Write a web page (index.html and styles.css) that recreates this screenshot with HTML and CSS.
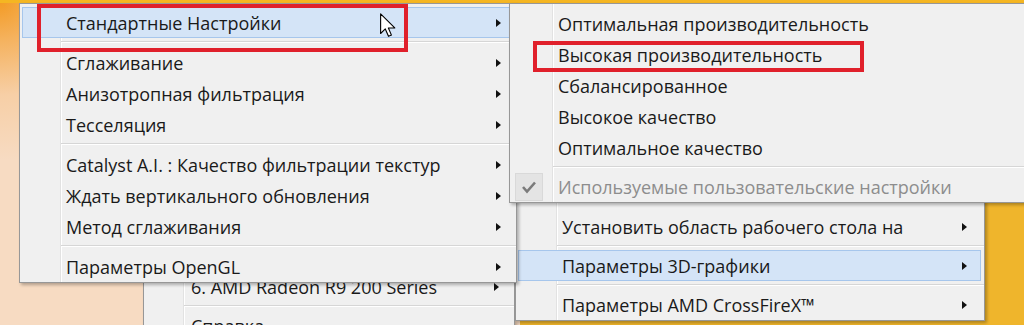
FILE: index.html
```html
<!DOCTYPE html>
<html lang="ru">

<head>
    <meta charset="UTF-8">
    <meta name="viewport" content="width=device-width, initial-scale=1.0">
    <title>Параметры 3D-графики</title>
    <link rel="stylesheet" href="styles.css">
</head>

<body>
    <div class="desktop">
        <div class="menu tray-menu">
            <div class="item"><span class="label">6. AMD Radeon R9 200 Series</span><span class="arrow"></span></div>
            <div class="sep"></div>
            <div class="item"><span class="label">Справка</span></div>
        </div>

        <div class="menu graphics-menu">
            <div class="item"><span class="label">Установить область рабочего стола на</span><span class="arrow"></span></div>
            <div class="sep"></div>
            <div class="item active"><span class="label">Параметры 3D-графики</span><span class="arrow"></span></div>
            <div class="sep"></div>
            <div class="item"><span class="label">Параметры AMD CrossFireX™</span><span class="arrow"></span></div>
        </div>

        <div class="menu presets-menu">
            <div class="item active"><span class="label">Стандартные Настройки</span><span class="arrow"></span></div>
            <div class="sep"></div>
            <div class="item"><span class="label">Сглаживание</span><span class="arrow"></span></div>
            <div class="item"><span class="label">Анизотропная фильтрация</span><span class="arrow"></span></div>
            <div class="item"><span class="label">Тесселяция</span><span class="arrow"></span></div>
            <div class="sep"></div>
            <div class="item"><span class="label">Catalyst A.I. : Качество фильтрации текстур</span><span class="arrow"></span></div>
            <div class="item"><span class="label">Ждать вертикального обновления</span><span class="arrow"></span></div>
            <div class="item"><span class="label">Метод сглаживания</span><span class="arrow"></span></div>
            <div class="sep"></div>
            <div class="item"><span class="label">Параметры OpenGL</span><span class="arrow"></span></div>
        </div>

        <div class="menu quality-menu">
            <div class="item"><span class="label">Оптимальная производительность</span></div>
            <div class="item"><span class="label">Высокая производительность</span></div>
            <div class="item"><span class="label">Сбалансированное</span></div>
            <div class="item"><span class="label">Высокое качество</span></div>
            <div class="item"><span class="label">Оптимальное качество</span></div>
            <div class="sep"></div>
            <div class="item checked disabled">
                <span class="check-box">
                    <svg width="28" height="28" viewBox="0 0 28 28">
                        <polyline points="8,14 12,18.5 20,9.5" fill="none" stroke="#7b7b7b" stroke-width="2.6" />
                    </svg>
                </span>
                <span class="label">Используемые пользовательские настройки</span>
            </div>
        </div>

        <div class="mark mark-presets"></div>
        <div class="mark mark-quality"></div>

        <svg class="cursor" width="16" height="25" viewBox="0 0 13 20">
            <path d="M0.5 0.5 L0.5 16.5 L4.3 12.8 L6.9 18.8 L9.3 17.8 L6.8 12 L12 12 Z" fill="#fff" stroke="#000"
                stroke-width="0.9" stroke-linejoin="round" />
        </svg>
    </div>
</body>

</html>
```

FILE: styles.css
```css
* {
    margin: 0;
    padding: 0;
    box-sizing: border-box;
}

body {
    font-family: 'Open Sans', 'Noto Sans', sans-serif;
    background: #efb52c;
    overflow: hidden;
}

.desktop {
    position: relative;
    width: 1024px;
    height: 325px;
    overflow: hidden;
    background:
        linear-gradient(#f5b622, #f5b622) left top / 100% 3px no-repeat,
        radial-gradient(circle at 0 0, #f39a22 0, #f5b25e 40px, #f7cfa6 95px, #f7dbc2 160px) left top / 520px 100% no-repeat,
        #efb52c;
}

/* menus */

.menu {
    --gutter: 40px;
    position: absolute;
    display: flex;
    flex-direction: column;
    background:
        linear-gradient(to right, transparent var(--gutter), #e2e2e2 var(--gutter), #e2e2e2 calc(var(--gutter) + 1px), #fff calc(var(--gutter) + 1px), #fff calc(var(--gutter) + 2px), transparent calc(var(--gutter) + 2px)),
        #f0f0f0;
    border: 1px solid #979797;
    box-shadow: 2px 2px 3px rgba(0, 0, 0, 0.28);
    color: #1a1a1a;
    font-size: 18px;
}

.item {
    display: flex;
    align-items: center;
    height: 31px;
    margin: 0 3px 0 2px;
    padding-left: 43px;
    padding-right: 11px;
    border: 1px solid transparent;
    white-space: nowrap;
}

.item.active {
    background: #d4e4f7;
    border-color: #a6c6ec;
}

.item.disabled {
    color: #8d8d8d;
}

.check-box {
    display: block;
    width: 28px;
    height: 28px;
    margin-right: 15px;
    background: #e4e4e4;
    border: 1px solid #d9d9d9;
}

.check-box svg {
    display: block;
    margin: -1px;
}

.arrow {
    margin-left: auto;
    width: 0;
    height: 0;
    border-left: 5px solid #111;
    border-top: 4px solid transparent;
    border-bottom: 4px solid transparent;
}

.sep {
    height: 8px;
    margin-left: calc(var(--gutter) + 1px);
    background: linear-gradient(transparent 3px, #d6d6d6 3px, #d6d6d6 4px, #fff 4px, #fff 5px, transparent 5px);
}

.presets-menu {
    left: 19px;
    top: 3px;
    width: 498px;
    padding-top: 3px;
}

.presets-menu .sep {
    height: 9px;
}

.quality-menu {
    --gutter: 42px;
    left: 509px;
    top: 3px;
    width: 540px;
    padding-top: 4px;
}

.quality-menu .item {
    padding-left: 45px;
}

.quality-menu .item.checked {
    padding-left: 2px;
}

.graphics-menu {
    left: 515px;
    top: 200px;
    width: 470px;
    padding-top: 10px;
}

.graphics-menu .item {
    padding-right: 13px;
}

.tray-menu {
    --gutter: 39px;
    left: 143px;
    top: 260px;
    width: 372px;
    height: 90px;
    padding-top: 10px;
}

.tray-menu .item {
    padding-left: 44px;
}

/* annotations drawn over the screenshot */

.mark {
    position: absolute;
    border: 4px solid #e0202b;
}

.mark-presets {
    left: 37px;
    top: 4px;
    width: 371px;
    height: 48px;
}

.mark-quality {
    left: 533px;
    top: 41px;
    width: 331px;
    height: 31px;
}

.cursor {
    position: absolute;
    left: 380px;
    top: 13px;
}
```
